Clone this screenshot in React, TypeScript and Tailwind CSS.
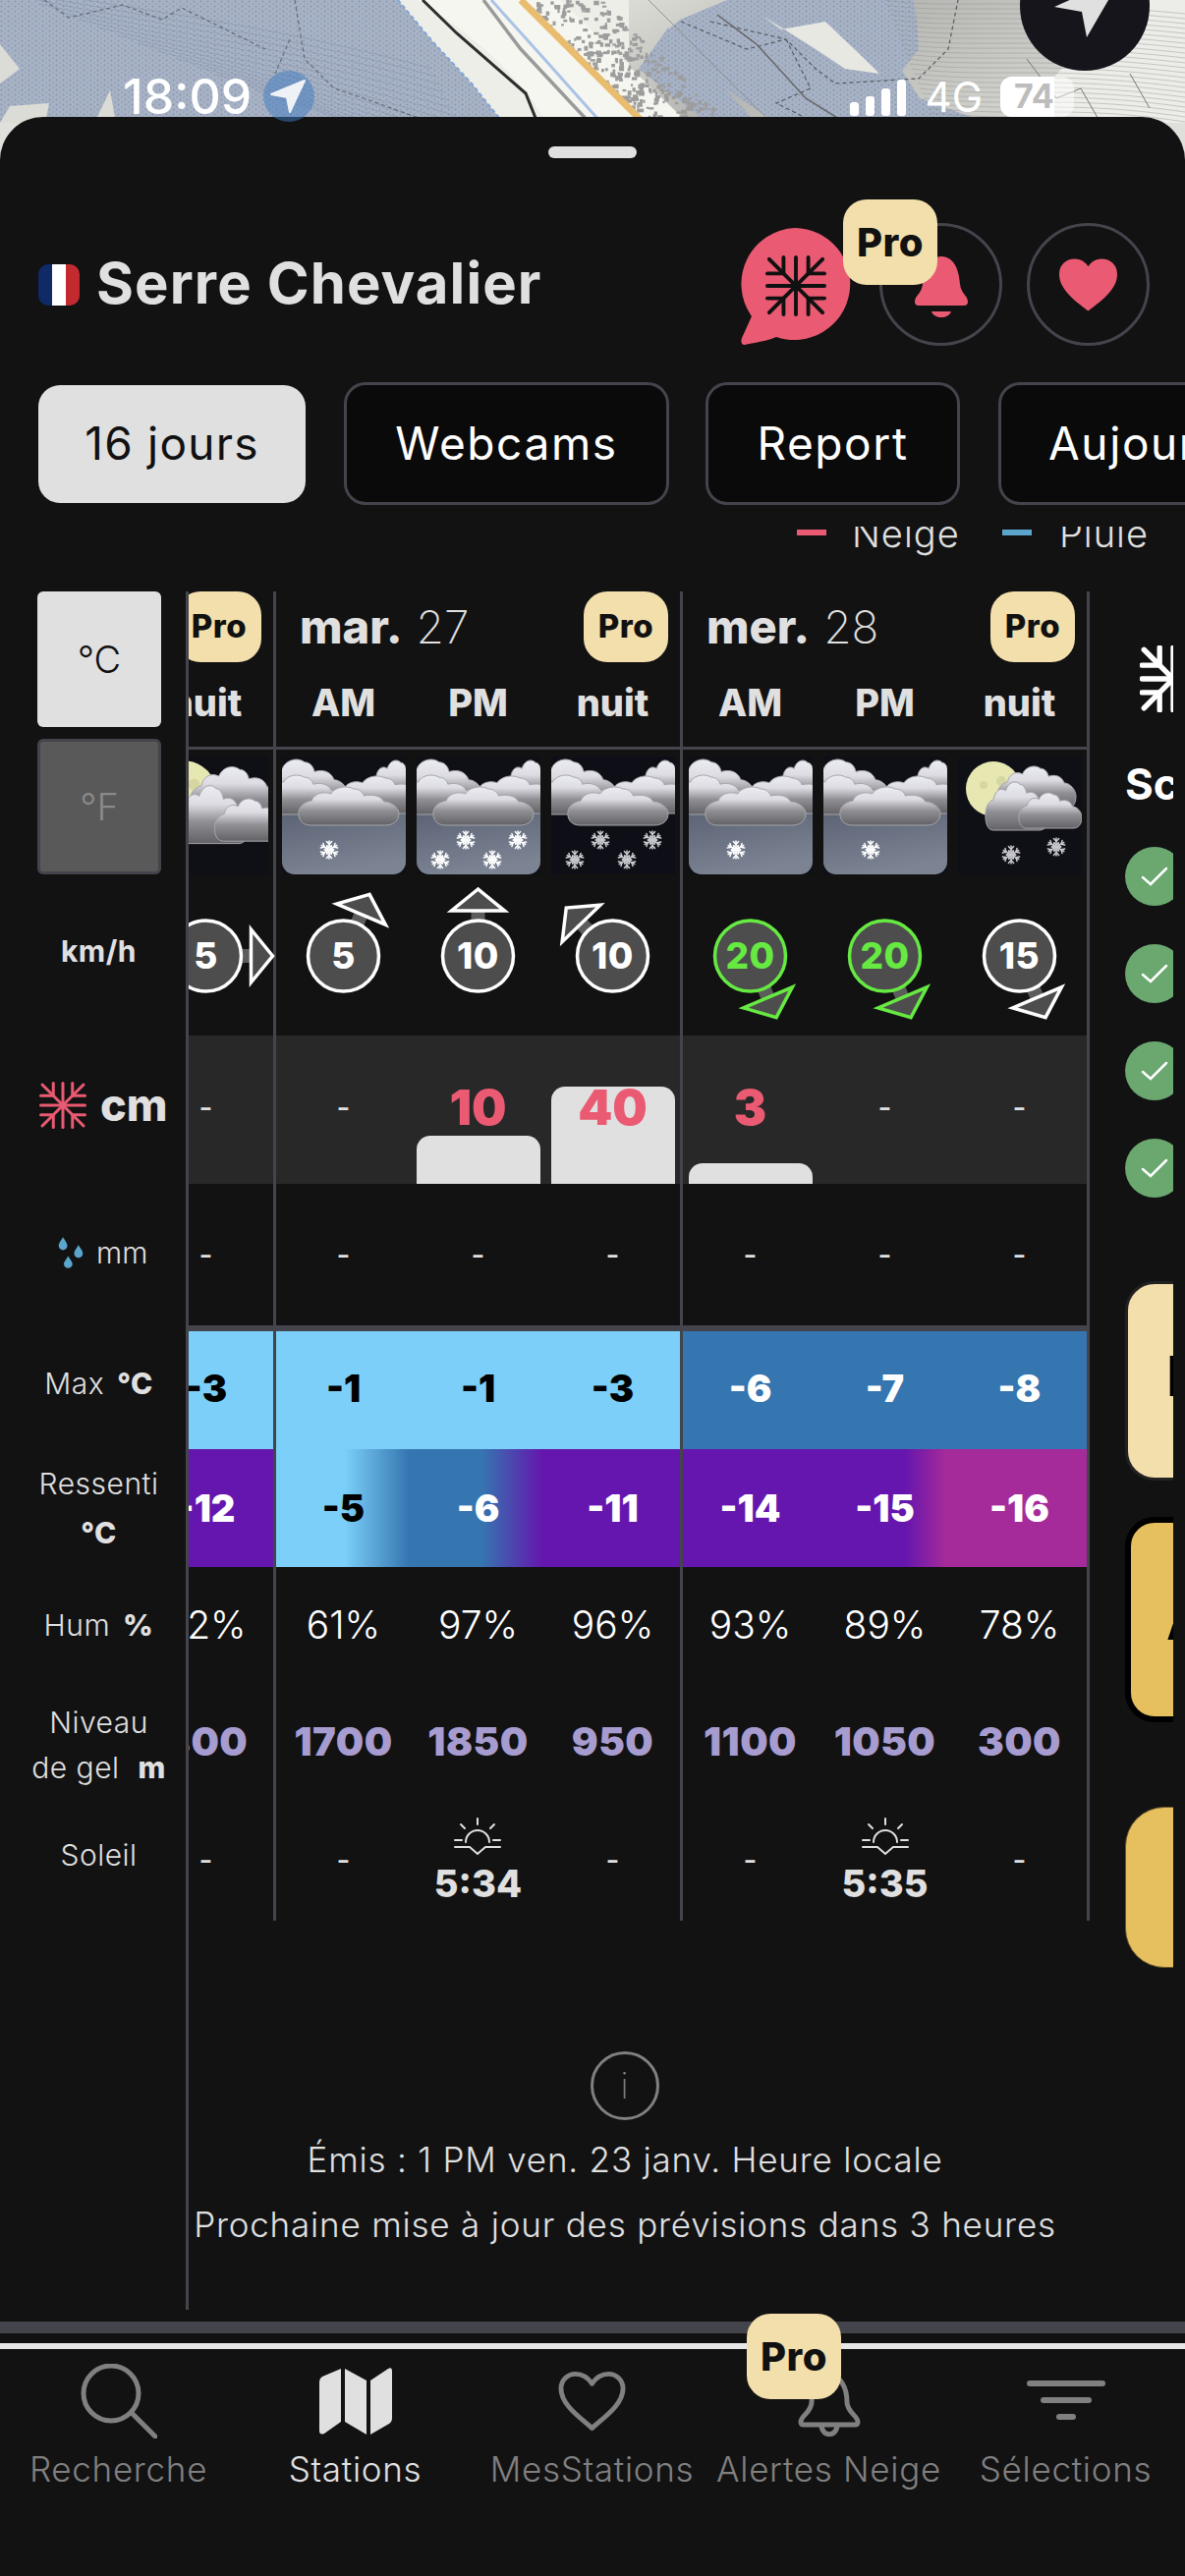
import React from "react";

function Flake({ x, y, s = 9, c = "#fff" }: { x: number; y: number; s?: number; c?: string }) {
  return (
    <g transform={`translate(${x} ${y})`} stroke={c} strokeWidth={1.5} strokeLinecap="round" fill="none">
      {[0, 60, 120, 180, 240, 300].map((a) => (
        <g key={a} transform={`rotate(${a})`}>
          <line x1={0} y1={0} x2={0} y2={-s} />
          <line x1={-2.6} y1={-s + 0.5} x2={0} y2={-s * 0.62} />
          <line x1={2.6} y1={-s + 0.5} x2={0} y2={-s * 0.62} />
          <line x1={-2.2} y1={-s * 0.45} x2={0} y2={-s * 0.25} />
          <line x1={2.2} y1={-s * 0.45} x2={0} y2={-s * 0.25} />
        </g>
      ))}
    </g>
  );
}

const CLOUD =
  "M30 70 C20 70 17 62 18 56 C19 49 26 46 31 45 C33 38 42 35 50 38 C54 31 66 29 73 33 C78 33 82 36 83 40 C92 38 100 40 103 46 C110 46 118 52 118 58 C118 66 112 70 104 70 Z";

function Puff({ x, y, w, h, fill = "url(#cl)" }: { x: number; y: number; w: number; h: number; fill?: string }) {
  return (
    <path
      d={CLOUD}
      transform={`translate(${x} ${y}) scale(${w / 100} ${h / 39}) translate(-18 -31)`}
      fill={fill}
      stroke="#a6a6ac"
      strokeWidth={1}
      vectorEffect="non-scaling-stroke"
    />
  );
}

function Defs() {
  return (
    <defs>
      <linearGradient id="cl" x1="0" y1="0" x2="0" y2="1">
        <stop offset="0" stopColor="#ecedf2" />
        <stop offset="0.32" stopColor="#dcdce2" />
        <stop offset="0.62" stopColor="#8f8f94" />
        <stop offset="1" stopColor="#626266" />
      </linearGradient>
      <linearGradient id="sk" x1="0" y1="0" x2="0.35" y2="1">
        <stop offset="0" stopColor="#5b6374" />
        <stop offset="1" stopColor="#7c8494" />
      </linearGradient>
      <clipPath id="ic">
        <rect x="0" y="0" width="126" height="120" rx="13" />
      </clipPath>
    </defs>
  );
}

function Overcast({ flakes, sky = true }: { flakes: number[][]; sky?: boolean }) {
  return (
    <svg viewBox="0 0 126 120" className="h-[120px] w-[126px]">
      <Defs />
      <rect width="126" height="120" fill={sky ? "#0f1016" : "#0e0f16"} />
      <g clipPath="url(#ic)">
        {sky && <rect y="57" width="126" height="63" fill="url(#sk)" />}
        <Puff x={88} y={4} w={60} h={46} />
        <Puff x={-32} y={3} w={100} h={54} />
        <Puff x={50} y={20} w={100} h={38} />
        <Puff x={-28} y={19} w={92} h={40} />
        <Puff x={17} y={31} w={102} h={39} />
        {flakes.map(([x, y], i) => (
          <Flake key={i} x={x} y={y} c={sky ? "#ffffff" : "#c9c9cf"} />
        ))}
      </g>
    </svg>
  );
}

function Moon({ big, flakes = [] }: { big?: boolean; flakes?: number[][] }) {
  return (
    <svg viewBox="0 0 126 120" className="h-[120px] w-[126px] overflow-hidden">
      <Defs />
      <rect x="-4" y="-8" width="134" height="128" fill="#0f1016" />
      <g transform={big ? "translate(10 7) scale(1.16 1.2) translate(-9 -7)" : ""}>
        <circle cx="36" cy="33" r="28" fill="#e7e7b2" />
        <circle cx="26" cy="29" r="4" fill="#d6d6a0" />
        <circle cx="44" cy="25" r="5" fill="#d6d6a0" />
        <Puff x={40} y={10} w={80} h={44} />
        <Puff x={28} y={26} w={64} h={49} />
        <Puff x={62} y={37} w={64} h={36} />
      </g>
      {flakes.map(([x, y], i) => (
        <Flake key={i} x={x} y={y} c="#c9c9cf" />
      ))}
    </svg>
  );
}

function Snowflake({ size, color, sw = 4 }: { size: number; color: string; sw?: number }) {
  const segs = [
    [0, -30, 0, 30],
    [-30, 0, 30, 0],
    [-28, -28, 28, 28],
    [28, -28, -28, 28],
    [-13, -30, -13, -14],
    [13, -30, 13, -14],
    [-13, 30, -13, 14],
    [13, 30, 13, 14],
    [-30, -13, -14, -13],
    [30, -13, 14, -13],
    [-30, 13, -14, 13],
    [30, 13, 14, 13],
  ];
  return (
    <svg viewBox="-32 -32 64 64" width={size} height={size} fill="none" stroke={color} strokeWidth={sw} strokeLinecap="round">
      {segs.map((s, i) => (
        <line key={i} x1={s[0]} y1={s[1]} x2={s[2]} y2={s[3]} />
      ))}
    </svg>
  );
}

function Wind({ v, a, c = "#ffffff" }: { v: number; a: number; c?: string }) {
  return (
    <div className="relative flex h-full w-full items-center justify-center pt-[2px]">
      <svg viewBox="-68.5 -83 137 164" className="absolute inset-0 h-full w-full overflow-visible">
        <g transform={`rotate(${a})`}>
          <rect x="-7" y="-48" width="14" height="14" fill="#5c5c5c" />
          <polygon points="0,-68 -27,-46 27,-46" fill="#4d4d4d" stroke={c} strokeWidth="3.5" strokeLinejoin="miter" />
        </g>
        <circle cx="0" cy="0" r="36" fill="#4d4d4d" stroke={c} strokeWidth="3.5" />
      </svg>
      <span className="relative text-[37px] font-extrabold tracking-[0.5px]" style={{ color: c }}>
        {v}
      </span>
    </div>
  );
}

function Pro({ cls }: { cls: string }) {
  return (
    <div className={`flex items-center justify-center bg-[#f3dfac] font-extrabold text-[#111] ${cls}`}>Pro</div>
  );
}

function Sun() {
  return (
    <svg viewBox="0 0 48 40" className="h-[40px] w-[48px]" fill="none" stroke="#e0e0e0" strokeWidth="2" strokeLinecap="round">
      <path d="M12 25 A12 12 0 0 1 36 25" />
      <path d="M24 1 V7 M7 7 L11 11 M41 7 L37 11 M1 23 H8 M40 23 H47" />
      <path d="M1 30 H16 L24 37 L32 30 H47" />
    </svg>
  );
}

type Cell = {
  img: React.ReactNode;
  wind: [number, number, string?];
  snow?: string;
  bar?: string;
  max: string;
  feels: string;
  maxDark?: boolean;
  feelsDark?: boolean;
  hum: string;
  gel: string;
  sun?: string;
  label: string;
};

const F1 = [[48, 95]];
const F4 = [[50, 85], [103, 85], [24, 105], [77, 105]];
const GREEN = "#66ea42";

const day1: Cell[] = [
  { label: "", img: null, wind: [0, 0], max: "", feels: "", hum: "", gel: "" },
  { label: "", img: null, wind: [0, 0], max: "", feels: "", hum: "", gel: "" },
  { label: "nuit", img: <Moon big />, wind: [5, 90], max: "-3", maxDark: true, feels: "-12", hum: "72%", gel: "800" },
];
const day2: Cell[] = [
  { label: "AM", img: <Overcast flakes={F1} />, wind: [5, 23], max: "-1", maxDark: true, feels: "-5", feelsDark: true, hum: "61%", gel: "1700" },
  { label: "PM", img: <Overcast flakes={F4} />, wind: [10, 0], snow: "10", bar: "h-[49px]", max: "-1", maxDark: true, feels: "-6", hum: "97%", gel: "1850", sun: "5:34" },
  { label: "nuit", img: <Overcast sky={false} flakes={F4} />, wind: [10, -44], snow: "40", bar: "h-[99px]", max: "-3", maxDark: true, feels: "-11", hum: "96%", gel: "950" },
];
const day3: Cell[] = [
  { label: "AM", img: <Overcast flakes={F1} />, wind: [20, 157, GREEN], snow: "3", bar: "h-[21px]", max: "-6", feels: "-14", hum: "93%", gel: "1100" },
  { label: "PM", img: <Overcast flakes={F1} />, wind: [20, 157, GREEN], max: "-7", feels: "-15", hum: "89%", gel: "1050", sun: "5:35" },
  { label: "nuit", img: <Moon flakes={[[54, 100], [100, 92]]} />, wind: [15, 157], max: "-8", feels: "-16", hum: "78%", gel: "300" },
];

function Dash() {
  return <span className="text-[30px] font-medium text-[#e0e0e0]">-</span>;
}

function Day({
  cells,
  name,
  num,
  maxBg,
  feelsBg,
}: {
  cells: Cell[];
  name: string;
  num: string;
  maxBg: string;
  feelsBg: string;
}) {
  const R = ({ cls, r }: { cls: string; r: (c: Cell) => React.ReactNode }) => (
    <div className={`flex ${cls}`}>
      {cells.map((c, i) => (
        <div key={i} className="relative flex w-[137px] shrink-0 items-center justify-center">
          {c.label ? r(c) : null}
        </div>
      ))}
    </div>
  );
  return (
    <div className="w-[414px] shrink-0 border-r-[3px] border-[#44444c]">
      <div className="h-[161px] border-b-[3px] border-[#44444c]">
        <div className="flex h-[72px] items-center justify-between pl-[24px] pr-[12px]">
          <div className="flex items-baseline gap-[14px] pb-[2px] text-[#e0e0e0]">
            <span className="text-[47px] font-extrabold leading-none">{name}</span>
            <span className="text-[46px] font-extralight leading-none">{num}</span>
          </div>
          <Pro cls="h-[72px] w-[86px] rounded-[24px] text-[33px] tracking-[0.5px]" />
        </div>
        <div className="flex h-[80px] items-center pt-[2px]">
          {cells.map((c, i) => (
            <div key={i} className="w-[137px] shrink-0 text-center text-[38px] font-extrabold text-[#e0e0e0]">
              {c.label}
            </div>
          ))}
        </div>
      </div>
      <R cls="h-[127px] items-end" r={(c) => c.img} />
      <R cls="h-[164px]" r={(c) => <Wind v={c.wind[0]} a={c.wind[1]} c={c.wind[2]} />} />
      <R
        cls="h-[151px] bg-[#282828]"
        r={(c) => (
          <div className="relative flex h-full w-full items-end justify-center">
            {c.bar && <div className={`w-[126px] rounded-t-[14px] bg-[#e0e0e0] ${c.bar}`} />}
            <div className={`absolute left-0 right-0 top-[44px] text-center ${c.snow ? "text-[50px] font-black text-[#ea5a72]" : ""}`}>
              {c.snow ? <span className="block leading-[58px]">{c.snow}</span> : <span className="block leading-[58px]"><Dash /></span>}
            </div>
          </div>
        )}
      />
      <R cls="h-[144px]" r={() => <Dash />} />
      <div className="h-[6px] bg-[#44444c]" />
      <div className={`h-[120px] ${maxBg}`}>
        <R
          cls="h-full"
          r={(c) => (
            <span className={`pb-[4px] text-[38px] font-black ${c.maxDark ? "text-black" : "text-white"}`}>{c.max}</span>
          )}
        />
      </div>
      <div className={`h-[120px] ${feelsBg}`}>
        <R
          cls="h-full"
          r={(c) => (
            <span className={`text-[38px] font-black ${c.feelsDark ? "text-black" : "text-white"}`}>{c.feels}</span>
          )}
        />
      </div>
      <R cls="h-[118px]" r={(c) => <span className="text-[39px] font-light text-white">{c.hum}</span>} />
      <R cls="h-[120px]" r={(c) => <span className="text-[40px] font-black tracking-[0.5px] text-[#a79ccf]">{c.gel}</span>} />
      <R
        cls="h-[122px]"
        r={(c) =>
          c.sun ? (
            <div className="flex flex-col items-center pt-[2px]">
              <Sun />
              <span className="mt-[4px] text-[38px] font-extrabold leading-[46px] text-[#e0e0e0]">{c.sun}</span>
            </div>
          ) : (
            <span className="pb-[2px]"><Dash /></span>
          )
        }
      />
    </div>
  );
}

function hash(i: number) {
  const x = Math.sin(i * 127.1) * 43758.5453;
  return x - Math.floor(x);
}

function MapPic() {
  const contours = Array.from({ length: 26 }, (_, i) => i);
  return (
    <svg viewBox="0 0 1206 125" className="h-[125px] w-full" preserveAspectRatio="none">
      <defs>
        <pattern id="dots" width="7" height="5" patternUnits="userSpaceOnUse">
          <rect width="7" height="5" fill="#a7b2c5" />
          <circle cx="1.5" cy="1.5" r="1" fill="#8996b0" />
          <circle cx="5" cy="4" r="1" fill="#95a2b9" />
        </pattern>
        <linearGradient id="shade" x1="0" y1="0" x2="1" y2="0.5">
          <stop offset="0" stopColor="#dcdcd6" />
          <stop offset="0.5" stopColor="#b6b7b3" />
          <stop offset="1" stopColor="#cfd0cb" />
        </linearGradient>
      </defs>
      <rect width="1206" height="125" fill="#eeeee8" />
      <path d="M640 0 H1060 L1090 60 L1030 125 H640 Z" fill="url(#shade)" />
      <path d="M1070 0 H1206 V125 H1030 L1090 60 Z" fill="#ecece8" />
      <path d="M0 0 H405 L440 42 L480 85 L512 125 H0 Z" fill="url(#dots)" />
      <path d="M0 45 L20 70 L0 85 Z M0 125 L10 108 L50 105 L46 125 Z M96 125 L112 92 L118 125 Z" fill="#dcdcd6" />
      {Array.from({ length: 16 }, (_, i) => (
        <path
          key={i}
          d={`M${-20 + i * 20} ${i * 8 - 20} C${120 + i * 18} ${i * 8 + 10} ${260 + i * 10} ${i * 9 + 20} ${440 + i * 4} ${i * 8 + 70}`}
          stroke="#7a88a0"
          strokeWidth="0.8"
          fill="none"
          opacity="0.5"
        />
      ))}
      <path d="M45 0 L70 18 L125 5 L165 20 L185 8 L270 50 M295 40 L280 75 M300 0 L310 60 L340 90 L370 100 L440 125" stroke="#555d69" strokeWidth="1.2" strokeDasharray="4 3" fill="none" opacity="0.8" />
      <path d="M405 0 L440 42 L480 85 L512 125" stroke="#7da6d8" strokeWidth="2" strokeDasharray="4 3" fill="none" />
      <path d="M692 20 L740 0 L930 0 L933 20 L935 50 L918 72 L936 100 L1005 125 L790 125 L700 65 L680 30 Z" fill="url(#dots)" />
      <path d="M650 70 L680 28 L770 125 L720 125 Z" fill="url(#dots)" />
      <path d="M776 16 L795 30 L840 22 L880 60 L895 75 L860 70 L830 50 Z" fill="#e7e8e2" />
      {contours.map((i) => (
        <path
          key={i}
          d={`M${900 + i * 2} ${i * 5} C${960 + i * 4} ${i * 5 + 10} ${1020 + i * 3} ${i * 5 - 4} ${1206} ${i * 5 + 14}`}
          stroke="#8d8e89"
          strokeWidth="0.7"
          fill="none"
          opacity="0.6"
        />
      ))}
      {contours.slice(0, 16).map((i) => (
        <path key={i} d={`M${620 + i * 8} ${i * 8 - 40} L${700 + i * 8} ${i * 8 + 40}`} stroke="#8d8e89" strokeWidth="0.6" fill="none" opacity="0.5" />
      ))}
      <path d="M693 22 L760 50 L800 40 M723 22 L800 40 L830 70 L850 85 L935 80 L965 50 L975 0 M800 40 L825 90 L790 105 L830 125" stroke="#555b60" strokeWidth="1.2" strokeDasharray="4 3" fill="none" />
      <path d="M730 15 L770 45 L820 100 L860 125" stroke="#666" strokeWidth="1.5" fill="none" />
      <path d="M1045 60 L1075 100 L1100 90 L1120 125 M1150 75 L1170 110" stroke="#777" strokeWidth="1" fill="none" />
      <path d="M425 0 H570 L700 125 H555 C540 90 490 40 425 0 Z" fill="#f6f6f0" />
      <path d="M430 0 L465 34 L535 95 L547 125" stroke="#2d2d2d" strokeWidth="3" fill="none" />
      <path d="M492 0 L530 50 L600 125" stroke="#9a9a9a" strokeWidth="3.5" fill="none" />
      <path d="M500 0 L545 50 L612 125" stroke="#a9c3e6" strokeWidth="3" fill="none" />
      {Array.from({ length: 300 }, (_, i) => {
        const t = hash(i) * 125;
        const x = 530 + t * 1.02 + hash(i + 500) * 85;
        return <rect key={i} x={x} y={t} width={2 + hash(i + 9) * 4} height={2 + hash(i + 3) * 3} fill="#9d9d9d" />;
      })}
      <path d="M530 0 L655 125" stroke="#e9bd70" strokeWidth="7" fill="none" />
      <ellipse cx="1104" cy="6" rx="66" ry="66" fill="#15151b" />
      <path d="M1073 7 L1142 -24 L1106 38 L1101 12 Z" fill="#e0e0e0" strokeLinejoin="round" />
    </svg>
  );
}

function StatusBar() {
  return (
    <div className="absolute left-0 top-[67px] flex h-[62px] w-full items-center pl-[125px] pr-[113px] text-white">
      <span className="w-[143px] text-[50px] font-medium leading-none">18:09</span>
      <svg viewBox="0 0 52 52" className="h-[52px] w-[52px]">
        <ellipse cx="26" cy="26" rx="26" ry="26" fill="#3f7bbf" opacity="0.5" />
        <path d="M8 24 L42 10 L27 42 L24 27 Z" fill="#eef2f7" stroke="#eef2f7" strokeWidth="2" strokeLinejoin="round" />
      </svg>
      <div className="ml-auto flex items-end gap-[7px] pt-[2px]">
        {["h-[14px]", "h-[20px]", "h-[28px]", "h-[37px]"].map((h) => (
          <div key={h} className={`w-[9px] rounded-[3px] bg-white ${h}`} />
        ))}
      </div>
      <span className="ml-[20px] pt-[2px] text-[42px] font-normal leading-none">4G</span>
      <div className="relative ml-[18px] flex h-[41px] w-[75px] items-center overflow-hidden rounded-[12px] bg-white/50">
        <div className="h-full w-[55px] bg-white" />
        <span className="absolute left-[14px] text-[34px] font-bold leading-none text-[#bdbdbd]">74</span>
      </div>
    </div>
  );
}

export default function App() {
  const labelCls = "flex items-center justify-center pl-[12px] text-center text-[30px] font-light tracking-[0.5px] text-[#e0e0e0]";
  const nav = [
    { t: "Recherche" },
    { t: "Stations", on: true },
    { t: "MesStations" },
    { t: "Alertes Neige" },
    { t: "Sélections" },
  ];
  return (
    <div className="relative h-[2622px] w-[1206px] overflow-hidden bg-[#dfe0dc] font-[Inter,sans-serif]">
      <MapPic />
      <div className="absolute inset-x-0 bottom-0 top-[119px] overflow-hidden rounded-t-[44px] bg-[#121213]">
        <div className="mx-auto mt-[30px] h-[12px] w-[90px] rounded-[6px] bg-[#e0e0e0]" />

        <div className="mt-[66px] flex h-[125px] items-center pl-[39px] pr-[36px]">
          <div className="flex h-[42px] w-[42px] overflow-hidden rounded-[10px]">
            <div className="flex-1 bg-[#0f2a66]" />
            <div className="flex-1 bg-white" />
            <div className="flex-1 bg-[#c22a2f]" />
          </div>
          <div className="ml-[17px] pb-[2px] text-[58px] font-bold tracking-[1.1px] text-[#e0e0e0]">Serre Chevalier</div>
          <div className="relative ml-auto flex items-center gap-[25px]">
            <div className="relative mr-[2px] h-[125px] w-[116px]">
              <svg viewBox="0 0 116 125" className="h-full w-full">
                <path d="M57 5 A57 57 0 1 1 38 116 C26 121 14 122 6 124 C2 124 2 120 3 117 L13 95 A57 57 0 0 1 57 5 Z" fill="#ea5a72" />
              </svg>
              <div className="absolute left-[27px] top-[33px]">
                <Snowflake size={62} color="#111" sw={4} />
              </div>
            </div>
            <div className="flex h-[125px] w-[125px] items-end justify-center rounded-full border-[3px] border-[#44444c] pb-[26px]">
              <svg viewBox="0 0 54 62" className="h-[62px] w-[54px]">
                <path d="M27 0 C40 0 45 14 46 28 C47 38 54 40 54 46 Q54 50 50 50 H4 Q0 50 0 46 C0 40 7 38 8 28 C9 14 14 0 27 0 Z M17 56 H37 C34 64 20 64 17 56 Z" fill="#ea5a72" />
              </svg>
            </div>
            <div className="flex h-[125px] w-[125px] items-center justify-center rounded-full border-[3px] border-[#44444c]">
              <svg viewBox="0 0 60 54" className="h-[54px] w-[59px]">
                <path d="M30 54 C22 47 0 34 0 16 C0 6 7 0 16 0 C22 0 27 3 30 8 C33 3 38 0 44 0 C53 0 60 6 60 16 C60 34 38 47 30 54 Z" fill="#ea5a72" />
              </svg>
            </div>
            <Pro cls="absolute left-[106px] top-[-24px] h-[87px] w-[96px] rounded-[24px] text-[40px] tracking-[0.5px]" />
          </div>
        </div>

        <div className="mt-[37px] flex h-[125px] items-center gap-[37px] pl-[39px] text-[46px] tracking-[1.2px]">
          <div className="mr-[2px] flex h-[120px] w-[272px] shrink-0 items-center justify-center rounded-[22px] bg-[#e0e0e0] font-normal text-[#111]">
            16 jours
          </div>
          {[
            ["Webcams", "w-[331px]"],
            ["Report", "w-[259px]"],
          ].map(([t, w]) => (
            <div key={t} className={`flex h-[125px] shrink-0 items-center justify-center rounded-[22px] border-[3px] border-[#44444c] bg-[#0a0a0a] font-normal tracking-[1.6px] text-white ${w}`}>
              {t}
            </div>
          ))}
          <div className="ml-[2px] flex h-[125px] w-[360px] shrink-0 items-center rounded-[22px] border-[3px] border-[#44444c] bg-[#0a0a0a] pl-[48px] font-normal tracking-[1.6px] text-white">
            Aujourd'hui
          </div>
        </div>

        <div className="mt-[22px] h-[66px] overflow-hidden">
          <div className="-mt-[13px] flex h-[40px] items-center pl-[811px] text-[38px] font-light tracking-[1px] text-[#e0e0e0]">
            <div className="-mt-[3px] h-[6px] w-[30px] bg-[#ea5a72]" />
            <span className="ml-[26px] w-[153px]">Neige</span>
            <div className="-mt-[3px] h-[6px] w-[30px] bg-[#5ba4cc]" />
            <span className="ml-[28px]">Pluie</span>
          </div>
        </div>

        <div className="flex">
          <div className="w-[189px] shrink-0">
            <div className="flex flex-col gap-[12px] pl-[38px]">
              <div className="flex h-[138px] w-[126px] items-center justify-center rounded-[6px] bg-[#e0e0e0] text-[38px] font-light text-[#111]">
                °C
              </div>
              <div className="flex h-[138px] w-[126px] items-center justify-center rounded-[6px] border-[3px] border-[#44444c] bg-[#595959] text-[38px] font-light text-[#8a8a8a]">
                °F
              </div>
            </div>
            <div className={`${labelCls} h-[164px] pb-[8px] !font-bold`}>km/h</div>
            <div className="flex h-[151px] items-center gap-[14px] pb-[10px] pl-[40px]">
              <Snowflake size={48} color="#ea5a72" sw={4} />
              <span className="text-[45px] font-extrabold leading-none text-[#e0e0e0]">cm</span>
            </div>
            <div className="flex h-[144px] items-center gap-[12px] pb-[4px] pl-[58px]">
              <svg viewBox="0 0 32 36" className="h-[36px] w-[28px]" fill="#5ba4cc">
                <path d="M7 0 C10 5 12 7 12 10 A5 5 0 0 1 2 10 C2 7 4 5 7 0 Z" />
                <path d="M25 9 C28 14 30 16 30 19 A5 5 0 0 1 20 19 C20 16 22 14 25 9 Z" />
                <path d="M13 22 C16 27 18 29 18 31 A5 5 0 0 1 8 31 C8 29 10 27 13 22 Z" />
              </svg>
              <span className="text-[30px] font-light text-[#e0e0e0]">mm</span>
            </div>
            <div className="h-[6px]" />
            <div className={`${labelCls} h-[120px] gap-[13px] pb-[14px]`}>
              Max <span className="font-extrabold">°C</span>
            </div>
            <div className={`${labelCls} h-[120px] flex-col leading-[50px]`}>
              <span>Ressenti</span>
              <span className="font-extrabold">°C</span>
            </div>
            <div className={`${labelCls} h-[118px] gap-[13px]`}>
              Hum <span className="font-extrabold">%</span>
            </div>
            <div className={`${labelCls} h-[120px] flex-col leading-[46px] pt-[6px]`}>
              <span>Niveau</span>
              <span>
                de gel <span className="ml-[10px] font-extrabold">m</span>
              </span>
            </div>
            <div className={`${labelCls} h-[122px] pb-[12px]`}>Soleil</div>
          </div>

          <div className="h-[1749px] border-l-[3px] border-[#44444c]">
            <div className="h-[1420px] w-[1002px] overflow-hidden">
              <div className="-ml-[325px] flex w-max items-start">
                <Day cells={day1} name="" num="" maxBg="bg-[#7bcff9]" feelsBg="bg-[#6516ae]" />
                <Day
                  cells={day2}
                  name="mar."
                  num="27"
                  maxBg="bg-[#7bcff9]"
                  feelsBg="bg-[linear-gradient(90deg,#7bcff9_17%,#3575b0_33%,#3575b0_51%,#6516ae_66%)]"
                />
                <Day
                  cells={day3}
                  name="mer."
                  num="28"
                  maxBg="bg-[#3575b0]"
                  feelsBg="bg-[linear-gradient(90deg,#6516ae_55%,#a52a9a_65%)]"
                />
                <div className="w-[300px] shrink-0 pl-[36px]">
                  <div className="ml-[15px] mt-[55px] h-[63px]">
                    <Snowflake size={68} color="#fff" sw={5} />
                  </div>
                  <div className="mt-[58px] h-[40px] text-[44px] font-bold leading-[40px] text-white">Score</div>
                  <div className="mt-[44px] flex flex-col gap-[39px]">
                    {[0, 1, 2, 3].map((i) => (
                      <div key={i} className="flex h-[60px] w-[60px] items-center justify-center rounded-full bg-[#6aa86f]">
                        <svg viewBox="0 0 30 24" className="h-[24px] w-[30px]" fill="none" stroke="#fff" strokeWidth="2.5" strokeLinecap="round">
                          <path d="M3 13 L11 20 L27 4" />
                        </svg>
                      </div>
                    ))}
                  </div>
                  <div className="mt-[85px] flex h-[203px] items-center rounded-[30px] border-[3px] border-[#222] bg-[#f3dfac] pb-[10px] pl-[39px] text-[56px] font-bold text-black">
                    P
                  </div>
                  <div className="mt-[37px] flex h-[209px] items-center rounded-[30px] border-[6px] border-black bg-[#e6c05f] pl-[36px] text-[56px] font-bold text-black">
                    A
                  </div>
                  <div className="mt-[86px] h-[164px] rounded-[40px] border-[1px] border-[#6b5a2c] bg-[#e6c05f]" />
                </div>
              </div>
            </div>
            <div className="w-[888px] pt-[66px] text-center text-[35px] font-light tracking-[0.8px] text-[#e0e0e0]">
              <div className="mx-auto flex h-[70px] w-[70px] items-center justify-center rounded-full border-[3px] border-[#808080] text-[36px] font-extralight text-[#808080]">
                i
              </div>
              <div className="mt-[7px] leading-[66px]">Émis : 1 PM ven. 23 janv. Heure locale</div>
              <div className="leading-[66px]">Prochaine mise à jour des prévisions dans 3 heures</div>
            </div>
          </div>
        </div>

        <div className="mt-[12px] h-[12px] bg-[#44444c]" />
        <div className="mt-[10px] h-[6px] bg-[#e8e8e8]" />
        <div className="relative flex pt-[15px]">
          {nav.map((n, i) => (
            <div key={n.t} className={`flex w-[241px] flex-col items-center ${n.on ? "text-[#e0e0e0]" : "text-[#808080]"}`}>
              <div className="flex h-[76px] items-center justify-center">
                {i === 0 && (
                  <svg viewBox="0 0 78 76" className="h-[76px] w-[78px]" fill="none" stroke="#808080" strokeWidth="5" strokeLinecap="round">
                    <circle cx="31" cy="30" r="28" />
                    <path d="M52 50 L76 74" />
                  </svg>
                )}
                {i === 1 && (
                  <svg viewBox="0 0 74 70" className="h-[70px] w-[74px]" fill="#e0e0e0">
                    <path d="M22 2 V56 L5 68 Q0 70 0 65 V16 Q0 12 3 10 Z" />
                    <path d="M26 2 L48 14 V69 L26 56 Z" />
                    <path d="M52 14 L70 2 Q74 0 74 4 V52 Q74 56 71 58 L52 69 Z" />
                  </svg>
                )}
                {i === 2 && (
                  <svg viewBox="0 0 70 62" className="h-[62px] w-[69px]" fill="none" stroke="#808080" strokeWidth="5" strokeLinejoin="round">
                    <path d="M35 59 C26 50 3 36 3 18 C3 9 10 3 18 3 C25 3 31 7 35 13 C39 7 45 3 52 3 C60 3 67 9 67 18 C67 36 44 50 35 59 Z" />
                  </svg>
                )}
                {i === 3 && (
                  <svg viewBox="0 0 64 66" className="mt-[8px] h-[66px] w-[64px]" fill="none" stroke="#808080" strokeWidth="5" strokeLinejoin="round">
                    <path d="M32 3 C44 3 50 16 50 30 C50 40 61 44 61 50 Q61 53 58 53 H6 Q3 53 3 50 C3 44 14 40 14 30 C14 16 20 3 32 3 Z" />
                    <path d="M24 53 C24 66 40 66 40 53" />
                  </svg>
                )}
                {i === 4 && (
                  <svg viewBox="0 0 80 42" className="h-[42px] w-[80px]" fill="#808080">
                    <rect x="0" y="0" width="80" height="6" rx="3" />
                    <rect x="14" y="17" width="52" height="6" rx="3" />
                    <rect x="30" y="34" width="20" height="6" rx="3" />
                  </svg>
                )}
              </div>
              <div className="mt-[10px] whitespace-nowrap text-[35px] font-light leading-[42px] tracking-[0.7px]">{n.t}</div>
            </div>
          ))}
          <Pro cls="absolute left-[760px] top-[-36px] h-[87px] w-[96px] rounded-[24px] text-[40px] tracking-[0.5px]" />
        </div>
      </div>
      <StatusBar />
    </div>
  );
}
